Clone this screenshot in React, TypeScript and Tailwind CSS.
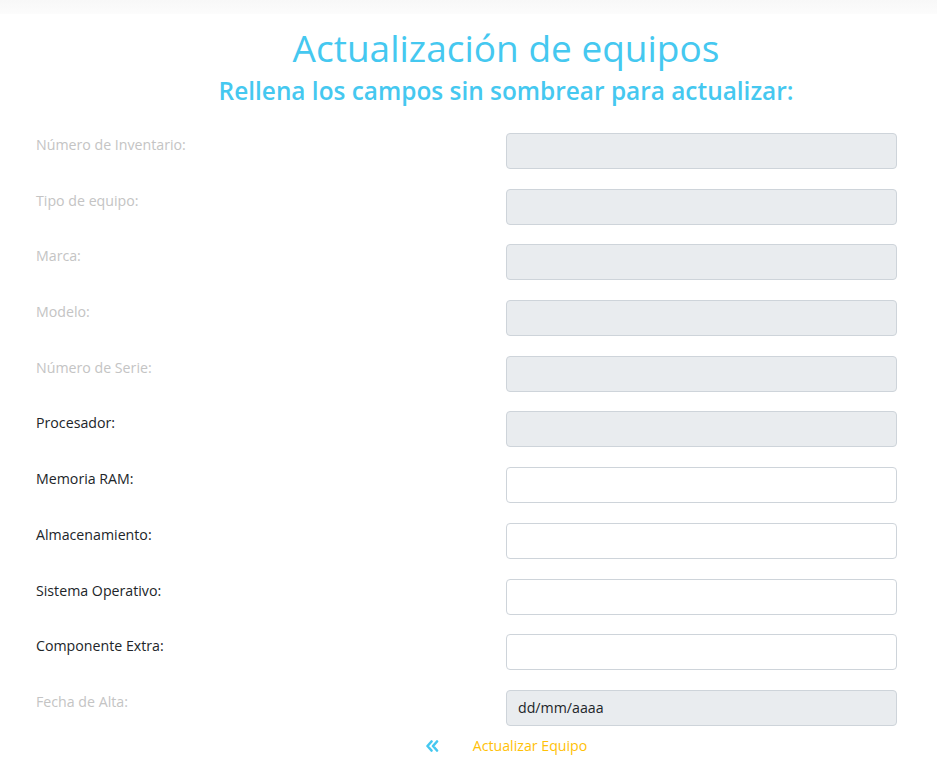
import React from "react";

const fields: { label: string; disabled: boolean; dark?: boolean; value?: string }[] = [
  { label: "Número de Inventario:", disabled: true },
  { label: "Tipo de equipo:", disabled: true },
  { label: "Marca:", disabled: true },
  { label: "Modelo:", disabled: true },
  { label: "Número de Serie:", disabled: true },
  { label: "Procesador:", disabled: true, dark: true },
  { label: "Memoria RAM:", disabled: false, dark: true },
  { label: "Almacenamiento:", disabled: false, dark: true },
  { label: "Sistema Operativo:", disabled: false, dark: true },
  { label: "Componente Extra:", disabled: false, dark: true },
  { label: "Fecha de Alta:", disabled: true, value: "dd/mm/aaaa" },
];

export default function App() {
  return (
    <div
      className="min-h-[775px] bg-white"
      style={{ fontFamily: '"Open Sans", "Noto Sans", sans-serif' }}
    >
      <div className="h-[14px] bg-gradient-to-b from-[#f8f8f8] to-[#fcfcfc]" />
      <div className="pl-[75px] text-center text-[#45c8f0]">
        <h1 className="mt-[10px] text-[37px] leading-[48px] font-normal">Actualización de equipos</h1>
        <h3 className="mt-[3px] text-[24.4px] leading-[32px] font-semibold">
          Rellena los campos sin sombrear para actualizar:
        </h3>
      </div>
      <div className="mt-[26px] pl-[36px] pr-[40px] flex flex-col gap-[19.7px]">
        {fields.map((f) => (
          <div key={f.label} className="grid grid-cols-[470px_1fr] items-start">
            <div
              className={`text-[14.2px] leading-[24px] ${f.dark ? "text-[#212529]" : "text-[#c4c4c4]"}`}
            >
              {f.label}
            </div>
            <div
              className={`h-[36px] rounded-[4px] border border-[#ced4da] ${
                f.disabled ? "bg-[#e9ecef]" : "bg-white"
              } flex items-center px-[11px] text-[14.2px] text-[#212529]`}
            >
              {f.value}
            </div>
          </div>
        ))}
      </div>
      <div className="mt-[8px] pl-[75px] flex justify-center items-center h-[24px]">
        <div className="flex items-center">
          <svg width="14" height="12" viewBox="0 0 14 12" className="text-[#45c8f0]">
            <path
              d="M6.5 1.5 L2.5 6 L6.5 10.5 M12 1.5 L8 6 L12 10.5"
              fill="none"
              stroke="currentColor"
              strokeWidth="2.6"
              strokeLinecap="round"
              strokeLinejoin="round"
            />
          </svg>
          <span className="ml-[34px] text-[14.2px] text-[#ffc107]">Actualizar Equipo</span>
        </div>
      </div>
    </div>
  );
}
